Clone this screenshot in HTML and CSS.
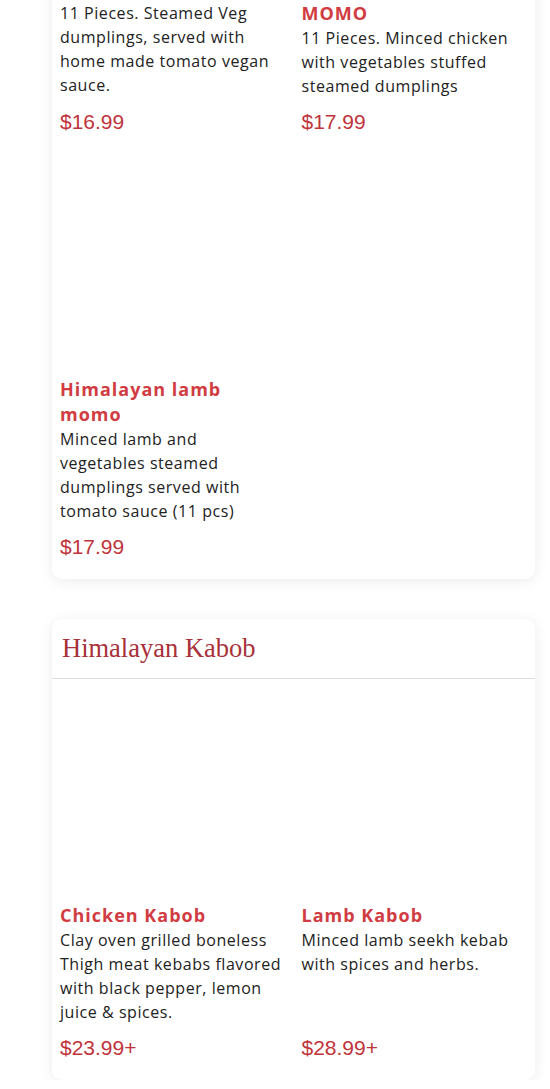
FILE: index.html
```
<!DOCTYPE html>
<html lang="en">
<head>
    <meta charset="UTF-8">
    <meta name="viewport" content="width=device-width, initial-scale=1.0">
    <title>Menu | Himalayan Kitchen</title>
    <link rel="stylesheet" href="styles.css">
</head>
<body>
    <main class="menu">
        <section class="category category-cut">
            <div class="items">
                <article class="item">
                    <div class="item-photo"></div>
                    <h3 class="item-name">Himalayan Veg Momo</h3>
                    <p class="item-desc">11 Pieces. Steamed Veg dumplings, served with home made tomato vegan sauce.</p>
                    <div class="item-price">$16.99</div>
                </article>
                <article class="item">
                    <div class="item-photo"></div>
                    <h3 class="item-name">Himalayan Chicken MOMO</h3>
                    <p class="item-desc">11 Pieces. Minced chicken with vegetables stuffed steamed dumplings</p>
                    <div class="item-price">$17.99</div>
                </article>
                <article class="item">
                    <div class="item-photo"></div>
                    <h3 class="item-name">Himalayan lamb momo</h3>
                    <p class="item-desc">Minced lamb and vegetables steamed dumplings served with tomato sauce (11 pcs)</p>
                    <div class="item-price">$17.99</div>
                </article>
            </div>
        </section>

        <section class="category">
            <header class="category-head">
                <h2>Himalayan Kabob</h2>
            </header>
            <div class="items">
                <article class="item">
                    <div class="item-photo"></div>
                    <h3 class="item-name">Chicken Kabob</h3>
                    <p class="item-desc">Clay oven grilled boneless Thigh meat kebabs flavored with black pepper, lemon juice &amp; spices.</p>
                    <div class="item-price">$23.99+</div>
                </article>
                <article class="item">
                    <div class="item-photo"></div>
                    <h3 class="item-name">Lamb Kabob</h3>
                    <p class="item-desc">Minced lamb seekh kebab with spices and herbs.</p>
                    <div class="item-price">$28.99+</div>
                </article>
            </div>
        </section>
    </main>
</body>
</html>
```
FILE: styles.css
```
:root {
    --name-red: #d13c42;
    --price-red: #bf343b;
    --title-red: #a9313a;
    --text-dark: #222;
    --border-soft: #dedede;
    --shadow-subtle: 0 2px 14px rgba(0, 0, 0, 0.08);
}

* {
    margin: 0;
    padding: 0;
    box-sizing: border-box;
}

body {
    background: #fff;
    font-family: 'Open Sans', sans-serif;
    color: var(--text-dark);
}

.menu {
    display: flex;
    flex-direction: column;
    gap: 40px;
    margin: -248px 15px 0 52px;
}

.category {
    background: #fff;
    border-radius: 10px;
    box-shadow: var(--shadow-subtle);
}

.category-head {
    padding: 14px 10px;
    border-bottom: 1px solid var(--border-soft);
}

.category-head h2 {
    font-family: 'Liberation Serif', serif;
    font-weight: 400;
    font-size: 26.5px;
    line-height: 31px;
    color: var(--title-red);
}

.items {
    display: grid;
    grid-template-columns: 1fr 1fr;
    gap: 16px;
    padding: 0 8px 17px;
}

.item {
    display: flex;
    flex-direction: column;
}

.item-photo {
    height: 224px;
}

.item-name {
    font-size: 18px;
    font-weight: 700;
    line-height: 25px;
    letter-spacing: 1px;
    color: var(--name-red);
}

.item-desc {
    font-size: 16px;
    line-height: 24px;
    letter-spacing: 0.55px;
}

.item-price {
    margin-top: auto;
    padding-top: 9px;
    font-family: 'Liberation Sans', Arial, sans-serif;
    font-size: 21px;
    line-height: 30px;
    color: var(--price-red);
}
```
